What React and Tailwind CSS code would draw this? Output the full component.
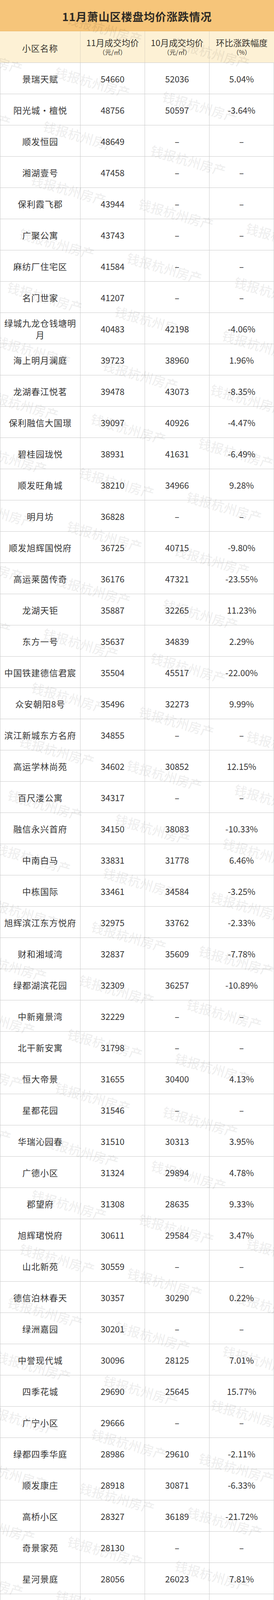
import React from "react";

// 11月萧山区楼盘均价涨跌情况 table
const rows = [
  ["景瑞天赋", "54660", "52036", "5.04%"],
  ["阳光城·檀悦", "48756", "50597", "-3.64%"],
  ["顺发恒园", "48649", "–", "–"],
  ["湘湖壹号", "47458", "–", "–"],
  ["保利霞飞郡", "43944", "–", "–"],
  ["广聚公寓", "43743", "–", "–"],
  ["麻纺厂住宅区", "41584", "–", "–"],
  ["名门世家", "41207", "–", "–"],
  ["绿城九龙仓钱塘明月", "40483", "42198", "-4.06%"],
  ["海上明月澜庭", "39723", "38960", "1.96%"],
  ["龙湖春江悦茗", "39478", "43073", "-8.35%"],
  ["保利融信大国璟", "39097", "40926", "-4.47%"],
  ["碧桂园珑悦", "38931", "41631", "-6.49%"],
  ["顺发旺角城", "38210", "34966", "9.28%"],
  ["明月坊", "36828", "–", "–"],
  ["顺发旭辉国悦府", "36725", "40715", "-9.80%"],
  ["高运莱茵传奇", "36176", "47321", "-23.55%"],
  ["龙湖天钜", "35887", "32265", "11.23%"],
  ["东方一号", "35637", "34839", "2.29%"],
  ["中国铁建德信君宸", "35504", "45517", "-22.00%"],
  ["众安朝阳8号", "35496", "32273", "9.99%"],
  ["滨江新城东方名府", "34855", "–", "–"],
  ["高运学林尚苑", "34602", "30852", "12.15%"],
  ["百尺溇公寓", "34317", "–", "–"],
  ["融信永兴首府", "34150", "38083", "-10.33%"],
  ["中南白马", "33831", "31778", "6.46%"],
  ["中栋国际", "33461", "34584", "-3.25%"],
  ["旭辉滨江东方悦府", "32975", "33762", "-2.33%"],
  ["财和湘域湾", "32837", "35609", "-7.78%"],
  ["绿都湖滨花园", "32309", "36257", "-10.89%"],
  ["中新雍景湾", "32229", "–", "–"],
  ["北干新安寓", "31798", "–", "–"],
  ["恒大帝景", "31655", "30400", "4.13%"],
  ["星都花园", "31546", "–", "–"],
  ["华瑞沁园春", "31510", "30313", "3.95%"],
  ["广德小区", "31324", "29894", "4.78%"],
  ["郡望府", "31308", "28635", "9.33%"],
  ["旭辉珺悦府", "30611", "29584", "3.47%"],
  ["山北新苑", "30559", "–", "–"],
  ["德信泊林春天", "30357", "30290", "0.22%"],
  ["绿洲嘉园", "30201", "–", "–"],
  ["中誉现代城", "30096", "28125", "7.01%"],
  ["四季花城", "29690", "25645", "15.77%"],
  ["广宁小区", "29666", "–", "–"],
  ["绿都四季华庭", "28986", "29610", "-2.11%"],
  ["顺发康庄", "28918", "30871", "-6.33%"],
  ["高桥小区", "28327", "36189", "-21.72%"],
  ["奇景家苑", "28130", "–", "–"],
  ["星河景庭", "28056", "26023", "7.81%"],
  ["开元名都", "27837", "30120", "-7.58%"],
  ["新桥园", "27745", "26610", "4.27%"],
  ["育才东苑", "27705", "–", "–"],
  ["碧秀名庭", "27591", "27610", "-0.07%"],
  ["半岛花园", "27380", "–", "–"],
  ["花城名苑", "27178", "25623", "6.07%"],
  ["萧然人家", "27078", "–", "–"],
  ["永泰名苑", "26858", "26445", "1.56%"],
  ["回澜北苑", "26813", "28110", "-4.61%"],
  ["泰和花园", "26785", "–", "–"],
  ["周家河头", "26731", "33281", "-19.68%"],
  ["新白马公寓", "26636", "–", "–"],
  ["柠檬公寓", "26412", "27280", "-3.18%"],
  ["新安园", "26178", "22703", "15.31%"],
  ["苏家潭小区", "26050", "–", "–"],
  ["百尺娄小区", "26037", "–", "–"],
  ["余家弄", "25877", "25810", "0.26%"],
  ["天海阳光", "25541", "25645", "-0.41%"],
  ["云涛名苑", "25512", "–", "–"],
  ["碧桂园·东旭府", "25416", "22134", "14.83%"],
  ["明怡花苑", "25385", "25708", "-1.26%"],
  ["滨水名庭", "25295", "23559", "7.37%"],
  ["富丽花园", "25231", "32249", "-21.76%"],
  ["金家桥公寓", "25156", "28037", "-10.28%"],
  ["潘水南苑", "25154", "24454", "2.86%"],
  ["丽晶国际", "25068", "26103", "-3.97%"],
  ["苏家潭居委会", "25025", "25405", "-1.50%"],
  ["学士桥小区", "24989", "30247", "-17.38%"],
  ["南市花园", "24955", "32276", "-22.68%"],
  ["徐家河公寓", "24848", "–", "–"],
  ["韩家弄", "24773", "28988", "-14.54%"],
  ["恒泰御庭园", "24758", "22822", "8.48%"],
  ["西湘公寓", "24622", "–", "–"],
];

// watermark lattice, roughly following the reference tiling
function buildMarks() {
  const marks = [];
  const a = { x: -30.5, y: 137.5 };
  const b = { x: 275, y: 62 };
  for (let i = -10; i < 60; i++) {
    for (let j = -10; j < 20; j++) {
      const x = 148 + i * a.x + j * b.x;
      const y = 160 + i * a.y + j * b.y;
      if (y < 0 || y > 6600) continue;
      if (x < -200 || x > 660) continue;
      marks.push({ x, y, key: `${i}-${j}` });
    }
  }
  return marks;
}

function Cell({ children, first }) {
  return (
    <div
      className={
        "flex items-center justify-center border-b border-r border-[#cbcbcb] text-center " +
        (first ? "border-l px-2 tracking-[1px]" : "")
      }
    >
      {children}
    </div>
  );
}

export default function App() {
  const marks = buildMarks();

  return (
    <div
      className="relative w-[701px] overflow-hidden bg-white text-[#353535]"
      style={{ fontFamily: '"Noto Sans CJK SC", "Noto Sans", sans-serif' }}
    >
      {/* title */}
      <div className="flex h-[80px] items-center justify-center border-b border-[#e8b461] bg-[#f6c57a]">
        <h1 className="pt-1 text-[28px] font-bold tracking-[1px] text-[#2e2a25]">
          11月萧山区楼盘均价涨跌情况
        </h1>
      </div>

      {/* header */}
      <div className="grid h-[80px] grid-cols-[206px_165px_165px_165px] bg-[#fdf1d5] text-[22px] leading-[26px] text-[#3a3630]">
        <div className="flex items-center justify-center border-r border-[#ddd3bf] pt-1 tracking-[1px]">小区名称</div>
        <div className="flex flex-col items-center justify-center border-r border-[#ddd3bf]">
          <span>11月成交均价</span>
          <span className="text-[16px] leading-[24px]">（元/㎡）</span>
        </div>
        <div className="flex flex-col items-center justify-center border-r border-[#ddd3bf]">
          <span>10月成交均价</span>
          <span className="text-[16px] leading-[24px]">（元/㎡）</span>
        </div>
        <div className="flex flex-col items-center justify-center">
          <span>环比涨跌幅度</span>
          <span className="text-[16px] leading-[24px]">（%）</span>
        </div>
      </div>

      {/* body */}
      <div className="border-t border-[#cbcbcb]">
        {rows.map((r) => (
          <div
            key={r[0]}
            className="grid h-[80px] grid-cols-[206px_165px_165px_165px] text-[22px] leading-[30px]"
          >
            <Cell first>{r[0]}</Cell>
            <Cell>{r[1]}</Cell>
            <Cell>{r[2]}</Cell>
            <Cell>{r[3]}</Cell>
          </div>
        ))}
      </div>

      {/* watermark */}
      <div className="pointer-events-none absolute inset-0">
        {marks.map((m) => (
          <span
            key={m.key}
            className="absolute origin-top-left rotate-[16deg] whitespace-nowrap text-[33px] font-medium text-black/[0.08]"
            style={{ left: m.x, top: m.y }}
          >
            钱报杭州房产
          </span>
        ))}
      </div>
    </div>
  );
}
